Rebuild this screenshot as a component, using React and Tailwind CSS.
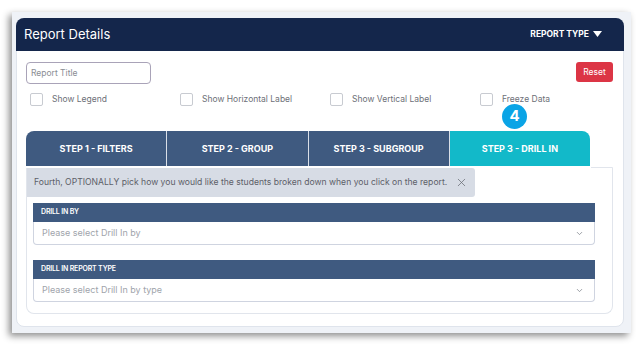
import React from 'react';
import { ChevronDown, X } from 'lucide-react';

const tabs = [
    { label: 'Step 1 - Filters' },
    { label: 'Step 2 - Group' },
    { label: 'Step 3 - Subgroup' },
    { label: 'Step 3 - Drill In', active: true },
];

const options = ['Show Legend', 'Show Horizontal Label', 'Show Vertical Label', 'Freeze Data'];

const Field = ({ label, placeholder }) => (
    <div className="w-[562px]">
        <div className="h-[19px] bg-[#3f5a80] text-white text-[7px] font-semibold uppercase flex items-center px-2 tracking-tight">
            {label}
        </div>
        <div className="h-[23px] bg-white border border-[#cfd4e0] border-t-0 rounded-b-[4px] flex items-center justify-between pl-2 pr-2.5">
            <span className="text-[9px] text-[#a0a4ab]">{placeholder}</span>
            <ChevronDown size={9} strokeWidth={2} className="text-[#7c818a]" />
        </div>
    </div>
);

const App = () => {
    return (
        <div className="w-[639px] h-[350px] bg-white pt-3 pl-3 font-['Inter',sans-serif]">
            {/* FRAME */}
            <div className="w-[619px] h-[321px] bg-[#eff2f7] shadow-[-3px_3px_7px_rgba(0,0,0,0.45)] pt-[6px] pl-1">
                {/* CARD */}
                <div className="w-[608px] h-[309px] bg-white rounded-lg border border-[#dfe4ec] flex flex-col">
                    <header className="h-[33px] -mx-px -mt-px bg-[#14264b] rounded-t-lg flex items-center justify-between pl-2 pr-[22px] shrink-0">
                        <h1 className="text-[13px] text-white">Report Details</h1>
                        <div className="flex items-center gap-1 text-white text-[8.5px] font-bold">
                            REPORT TYPE
                            <svg width="9" height="7" viewBox="0 0 9 7"><path d="M0 0h9L4.5 6z" fill="white" /></svg>
                        </div>
                    </header>

                    <div className="px-[9px] pt-[11px]">
                        <div className="flex items-start justify-between">
                            <div className="w-[125px] h-[22px] border border-[#a9a3b8] rounded-[4px] flex items-center px-1">
                                <span className="text-[8.5px] text-[#8a8d94]">Report Title</span>
                            </div>
                            <button className="w-[37px] h-[20px] bg-[#dc3545] text-white text-[8.5px] rounded-[3px] mr-px">Reset</button>
                        </div>

                        <div className="flex pl-1 mt-[9px]">
                            {options.map((opt) => (
                                <label key={opt} className="w-[150px] shrink-0 flex items-center gap-[9px]">
                                    <span className="w-[13px] h-[13px] border border-[#c8cbd1] rounded-[2px] bg-white" />
                                    <span className="text-[8.5px] text-[#6d7078]">{opt}</span>
                                </label>
                            ))}
                        </div>

                        {/* TABS */}
                        <div className="relative mt-[25px]">
                            <div className="absolute top-[-27px] left-[476px] w-[25px] h-[25px] rounded-full bg-[#0aa4e6] text-white text-[15px] font-bold flex items-center justify-center">
                                4
                            </div>
                            <div className="flex w-[564px] h-[35px]">
                                {tabs.map((tab, i) => (
                                    <div
                                        key={tab.label}
                                        className={`flex-1 flex items-center justify-center text-[9px] font-bold uppercase text-white ${
                                            tab.active ? 'bg-[#12b9c9]' : 'bg-[#3f5a80]'
                                        } ${i === 0 ? 'rounded-tl-lg' : 'border-l border-[#d9dfe8]'} ${i === tabs.length - 1 ? 'rounded-tr-lg' : ''}`}
                                    >
                                        {tab.label}
                                    </div>
                                ))}
                            </div>

                            <div className="w-[587px] h-[146px] border border-[#e1e5ec] border-t-0 rounded-b-lg relative">
                                <div className="absolute -top-px left-[564px] right-[-1px] border-t border-[#e1e5ec] rounded-tr" />
                                <div className="w-[448px] h-[29px] mt-[2px] bg-[#d7dce5] rounded-r-[3px] flex items-center justify-between pl-[7px] pr-[7px]">
                                    <span className="text-[8.6px] text-[#5d6068] whitespace-nowrap">
                                        Fourth, OPTIONALLY pick how you would like the students broken down when you click on the report.
                                    </span>
                                    <X size={13} strokeWidth={1.4} className="text-[#6a6e76] shrink-0" />
                                </div>
                                <div className="pl-[6px] pt-[6px] flex flex-col gap-[15px]">
                                    <Field label="Drill In By" placeholder="Please select Drill In by" />
                                    <Field label="Drill In Report Type" placeholder="Please select Drill In by type" />
                                </div>
                            </div>
                        </div>
                    </div>
                </div>
            </div>
        </div>
    );
};

export default App;
